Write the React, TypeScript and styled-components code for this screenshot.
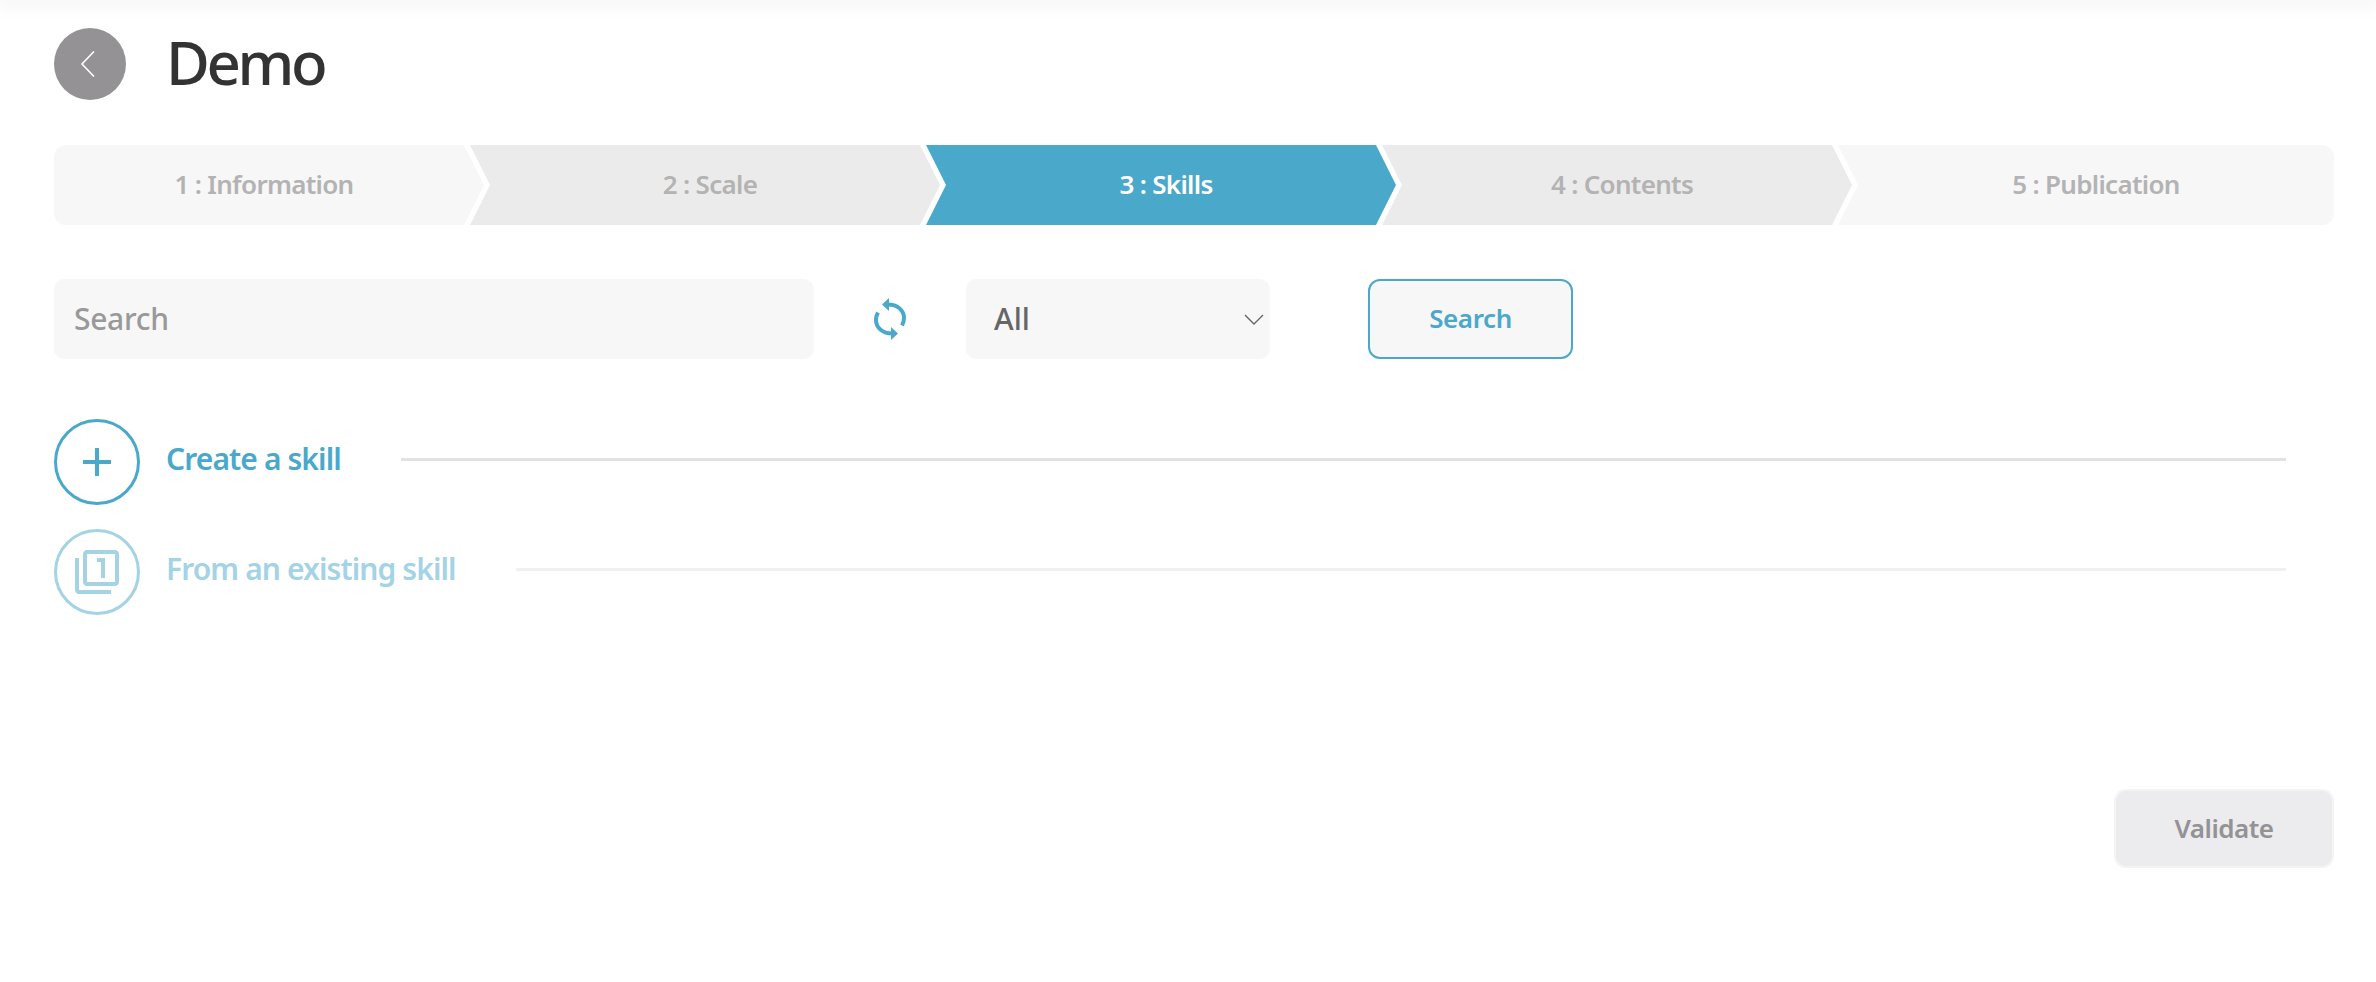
import React from 'react';
import styled, { createGlobalStyle } from 'styled-components';
import { MdOutlineFilter1 } from 'react-icons/md';

const GlobalStyle = createGlobalStyle`
  html, body {
    margin: 0;
    padding: 0;
    background: #ffffff;
  }
  * {
    box-sizing: border-box;
  }
  body {
    font-family: 'Noto Sans', 'Open Sans', sans-serif;
  }
`;

const Page = styled.div`
  width: 2376px;
  height: 982px;
  padding: 28px 42px 0 54px;
  overflow: hidden;
`;

const TopEdge = styled.div`
  height: 0;
  margin: -28px -42px 28px -54px;
  box-shadow: 0 0 18px 4px rgba(0, 0, 0, 0.08);
`;

const Header = styled.header`
  display: flex;
  align-items: center;
  gap: 40px;
  height: 72px;
`;

const BackButton = styled.button`
  display: flex;
  align-items: center;
  justify-content: center;
  width: 72px;
  height: 72px;
  padding: 0 4px 0 0;
  border: none;
  border-radius: 50%;
  background: #949295;
`;

const Title = styled.h1`
  margin: -5px 0 0;
  color: #333333;
  font-size: 60px;
  font-weight: 500;
  letter-spacing: -3.4px;
  line-height: 72px;
`;

const Steps = styled.nav`
  display: flex;
  height: 80px;
  margin-top: 45px;
`;

type StepTone = 'light' | 'mid' | 'active';

const stepBackground: Record<StepTone, string> = {
  light: '#f7f7f7',
  mid: '#ebebeb',
  active: '#4aa8cb',
};

const Step = styled.div<{ $tone: StepTone; $pos: 'first' | 'middle' | 'last' }>`
  display: flex;
  align-items: center;
  justify-content: center;
  flex: none;
  width: ${(p) => (p.$pos === 'first' ? 430 : p.$pos === 'last' ? 496 : 470)}px;
  margin-right: ${(p) => (p.$pos === 'last' ? 0 : -14)}px;
  padding-left: ${(p) => (p.$pos === 'first' ? 0 : p.$pos === 'last' ? 20 : 10)}px;
  padding-right: ${(p) => (p.$pos === 'first' ? 10 : 0)}px;
  padding-bottom: 2px;
  background: ${(p) => stepBackground[p.$tone]};
  border-radius: ${(p) => (p.$pos === 'first' ? '12px 0 0 12px' : p.$pos === 'last' ? '0 12px 12px 0' : '0')};
  clip-path: ${(p) =>
    p.$pos === 'first'
      ? 'polygon(0 0, calc(100% - 20px) 0, 100% 50%, calc(100% - 20px) 100%, 0 100%)'
      : p.$pos === 'last'
        ? 'polygon(0 0, 100% 0, 100% 100%, 0 100%, 20px 50%)'
        : 'polygon(0 0, calc(100% - 20px) 0, 100% 50%, calc(100% - 20px) 100%, 0 100%, 20px 50%)'};
  color: ${(p) => (p.$tone === 'active' ? '#ffffff' : '#b3b3b3')};
  font-size: 26px;
  font-weight: 600;
  letter-spacing: -0.7px;
`;

const SearchRow = styled.div`
  display: flex;
  align-items: center;
  height: 80px;
  margin-top: 54px;
`;

const SearchInput = styled.input`
  width: 760px;
  height: 80px;
  padding: 0 20px 2px;
  border: none;
  border-radius: 10px;
  background: #f7f7f7;
  color: #666666;
  font-family: inherit;
  font-size: 30px;
  font-weight: 500;
  letter-spacing: -0.3px;
  outline: none;

  &::placeholder {
    color: #999999;
    opacity: 1;
  }
`;

const RefreshButton = styled.button`
  display: flex;
  align-items: center;
  justify-content: center;
  width: 152px;
  height: 80px;
  padding: 0;
  border: none;
  background: none;
`;

const SelectWrap = styled.div`
  position: relative;
  width: 304px;
  height: 80px;
`;

const Select = styled.select`
  width: 100%;
  height: 100%;
  padding: 0 28px 2px;
  border: none;
  border-radius: 10px;
  background: #f7f7f7;
  color: #666666;
  font-family: inherit;
  font-size: 30px;
  font-weight: 500;
  appearance: none;
  outline: none;
`;

const SelectChevron = styled.svg`
  position: absolute;
  top: 35px;
  right: 6px;
  pointer-events: none;
`;

const SearchButton = styled.button`
  width: 205px;
  height: 80px;
  margin-left: 98px;
  padding-bottom: 3px;
  border: 2px solid #4aa8cb;
  border-radius: 12px;
  background: #f7f7f7;
  color: #4aa8cb;
  font-family: inherit;
  font-size: 26px;
  font-weight: 600;
  letter-spacing: -0.4px;
`;

const Actions = styled.div`
  display: flex;
  flex-direction: column;
  gap: 24px;
  margin-top: 60px;
`;

const ActionRow = styled.div<{ $faded?: boolean }>`
  display: flex;
  align-items: center;
  height: 86px;
  padding-right: 48px;
  opacity: ${(p) => (p.$faded ? 0.5 : 1)};
`;

const ActionCircle = styled.div`
  display: flex;
  align-items: center;
  justify-content: center;
  flex: none;
  width: 86px;
  height: 86px;
  border: 3px solid #4aa8cb;
  border-radius: 50%;
  color: #4aa8cb;
`;

const ActionLabel = styled.span`
  flex: none;
  margin: 0 60px 8px 26px;
  color: #4aa8cb;
  font-size: 30px;
  font-weight: 600;
  letter-spacing: -0.9px;
  white-space: nowrap;
`;

const ActionLine = styled.div`
  flex: 1;
  height: 3px;
  margin-bottom: 6px;
  background: #e2e2e2;
`;

const Footer = styled.div`
  display: flex;
  justify-content: flex-end;
  margin-top: 174px;
`;

const ValidateButton = styled.button`
  width: 220px;
  height: 79px;
  padding-bottom: 2px;
  border: 2px solid #f4f4f4;
  border-radius: 12px;
  background: #ecebed;
  color: #939295;
  font-family: inherit;
  font-size: 26px;
  font-weight: 600;
  letter-spacing: -0.5px;
`;

const steps: { label: string; tone: StepTone }[] = [
  { label: '1 : Information', tone: 'light' },
  { label: '2 : Scale', tone: 'mid' },
  { label: '3 : Skills', tone: 'active' },
  { label: '4 : Contents', tone: 'mid' },
  { label: '5 : Publication', tone: 'light' },
];

const RefreshIcon = () => (
  <svg width="34" height="44" viewBox="0 0 34 44" fill="none">
    <path d="M15 7.5 C24 7.5 31 13 31 21 C31 24 30.3 26.2 29 28.5" stroke="#4aa8cb" strokeWidth="4" />
    <path d="M19 36.5 C10 36.5 3 31 3 23 C3 20 3.7 17.8 5 15.5" stroke="#4aa8cb" strokeWidth="4" />
    <path d="M16 1 L16 14 L9 7.5 Z" fill="#4aa8cb" />
    <path d="M18 30 L18 43 L25 36.5 Z" fill="#4aa8cb" />
  </svg>
);

const App: React.FC = () => {
  return (
    <Page>
      <GlobalStyle />
      <TopEdge />
      <Header>
        <BackButton aria-label="Back">
          <svg width="16" height="28" viewBox="0 0 16 28" fill="none">
            <path d="M14 1.5 L2 14 L14 26.5" stroke="#ffffff" strokeWidth="1.6" />
          </svg>
        </BackButton>
        <Title>Demo</Title>
      </Header>
      <Steps>
        {steps.map((step, i) => (
          <Step
            key={step.label}
            $tone={step.tone}
            $pos={i === 0 ? 'first' : i === steps.length - 1 ? 'last' : 'middle'}
          >
            {step.label}
          </Step>
        ))}
      </Steps>
      <SearchRow>
        <SearchInput placeholder="Search" />
        <RefreshButton aria-label="Reset">
          <RefreshIcon />
        </RefreshButton>
        <SelectWrap>
          <Select defaultValue="All">
            <option>All</option>
          </Select>
          <SelectChevron width="20" height="11" viewBox="0 0 20 11" fill="none">
            <path d="M1 1 L10 10 L19 1" stroke="#666666" strokeWidth="1.4" />
          </SelectChevron>
        </SelectWrap>
        <SearchButton>Search</SearchButton>
      </SearchRow>
      <Actions>
        <ActionRow>
          <ActionCircle>
            <svg width="28" height="28" viewBox="0 0 28 28">
              <path d="M14 0 V28 M0 14 H28" stroke="#4aa8cb" strokeWidth="4" />
            </svg>
          </ActionCircle>
          <ActionLabel>Create a skill</ActionLabel>
          <ActionLine />
        </ActionRow>
        <ActionRow $faded>
          <ActionCircle>
            <MdOutlineFilter1 size={48} />
          </ActionCircle>
          <ActionLabel>From an existing skill</ActionLabel>
          <ActionLine />
        </ActionRow>
      </Actions>
      <Footer>
        <ValidateButton>Validate</ValidateButton>
      </Footer>
    </Page>
  );
};

export default App;
